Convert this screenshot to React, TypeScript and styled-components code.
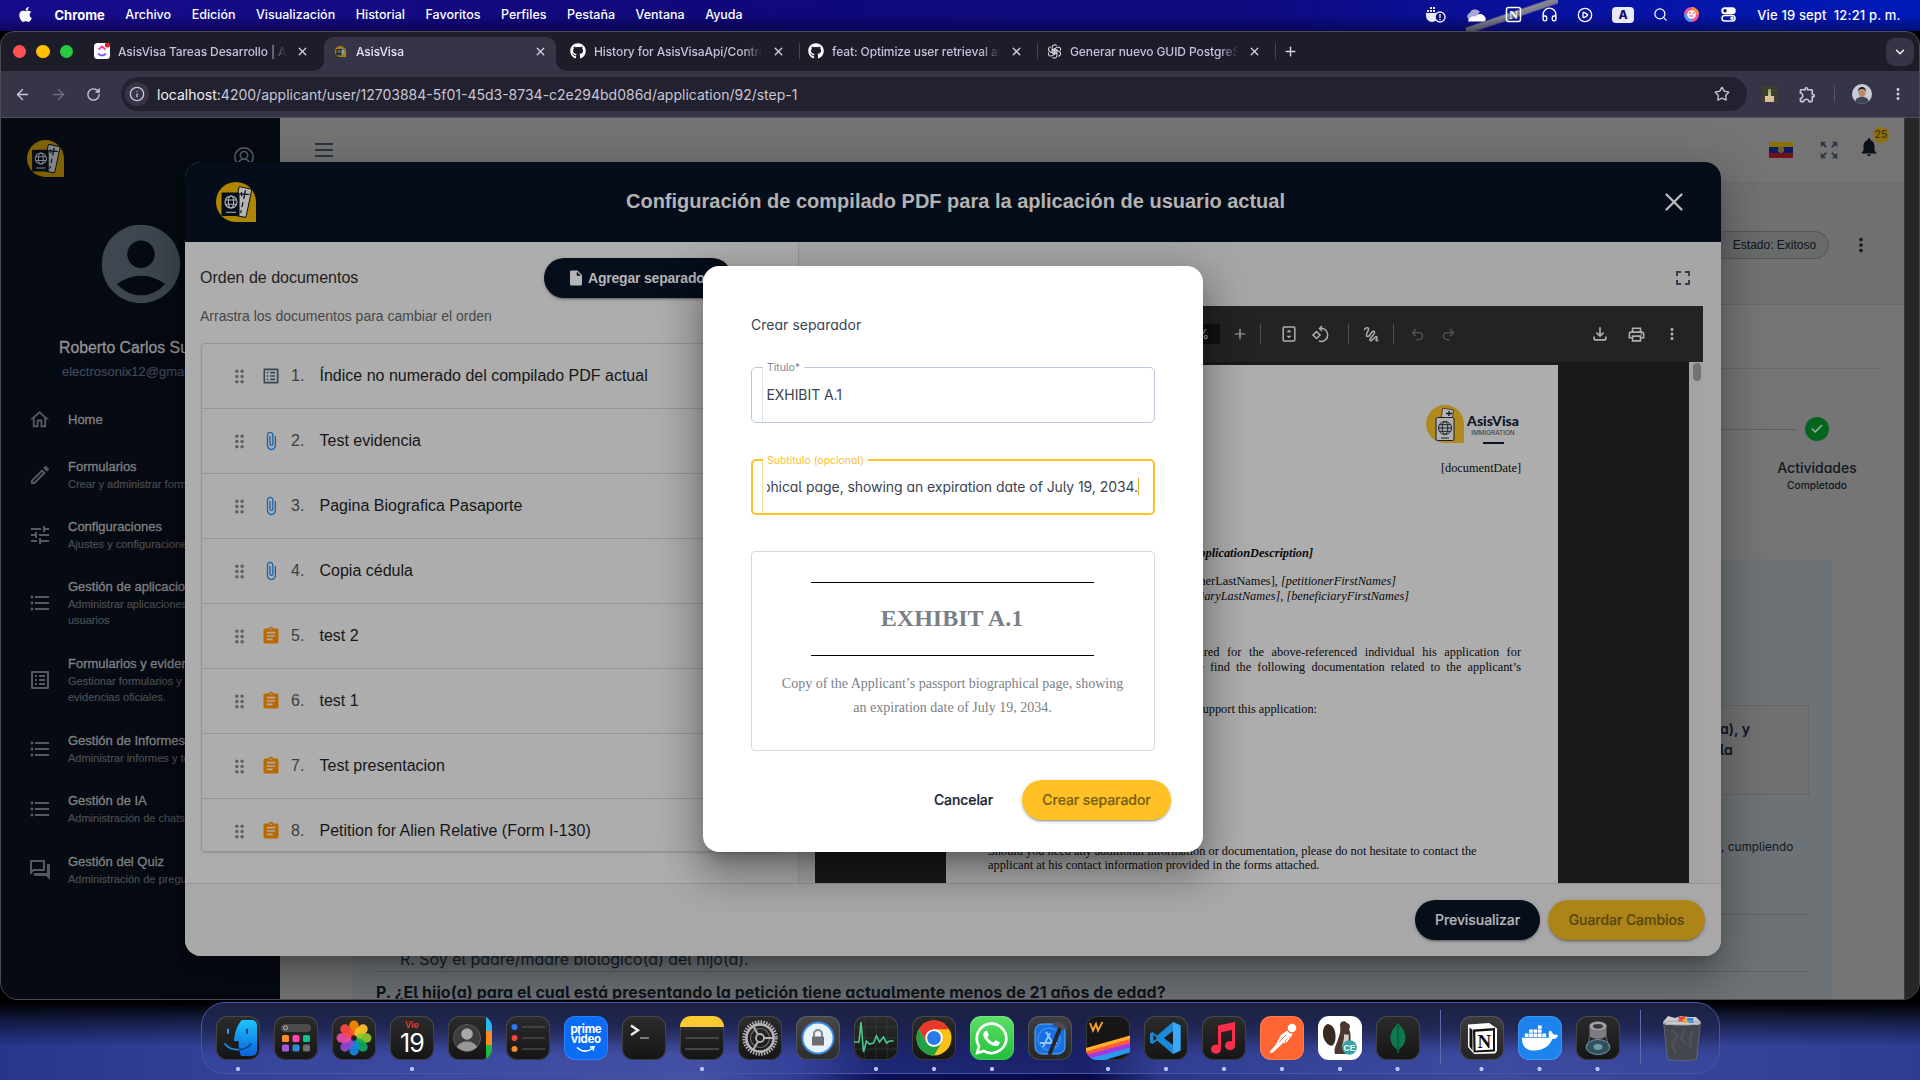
import React from 'react';
import styled, { createGlobalStyle, css } from 'styled-components';
import {
  MdOutlineHome, MdOutlineEdit, MdTune, MdFormatListBulleted, MdOutlineListAlt, MdOutlineQuestionAnswer,
  MdAccountCircle, MdDragIndicator, MdAttachFile, MdAssignment, MdInsertDriveFile, MdFullscreen,
  MdNotifications, MdZoomOutMap, MdMoreVert, MdOutlineFileDownload, MdOutlinePrint, MdListAlt, MdOutlineExtension,
} from 'react-icons/md';
import { FaApple, FaGithub, FaDocker, FaWhatsapp } from 'react-icons/fa';
import {
  ArrowLeft, ArrowRight, RotateCw, Info, Star, X, Plus, ChevronDown, Search, Headphones,
  CirclePlay, CircleUserRound, Check, Undo2, Redo2,
} from 'lucide-react';

const INTER = `Inter, Roboto, sans-serif`;
const HELV = `"Liberation Sans", Arial, sans-serif`;
const SERIF = `"Liberation Serif", "Times New Roman", serif`;

const Global = createGlobalStyle`
  * { box-sizing: border-box; }
  body { margin: 0; background: #000; }
  p, h1, h2, h3 { margin: 0; font-weight: inherit; font-size: inherit; }
  button { border: 0; padding: 0; font: inherit; color: inherit; background: none; }
`;

/* ---------- desktop ---------- */
const Desktop = styled.div`
  position: relative;
  width: 1920px;
  height: 1080px;
  overflow: hidden;
  display: flex;
  flex-direction: column;
  font-family: ${INTER};
  background:
    radial-gradient(circle at 20px 978px, transparent 19px, #1c64a8 20px, #12488a 24px, transparent 27px) 0 978px / 22px 24px no-repeat,
    linear-gradient(180deg, #000 0, #000 1003px, rgba(0, 0, 0, .55) 1020px, transparent 1046px),
    linear-gradient(90deg, #26368a 0, #36459a 300px, #4552a4 700px, #303b93 800px, #0b1156 880px, #070a48 1090px, #2a3786 1160px, #3c4a9c 1500px, #2e3d90 1920px);
`;

const MenuBar = styled.header`
  height: 31px;
  padding: 0 19.5px 2px 17px;
  display: flex;
  align-items: center;
  justify-content: space-between;
  color: #fff;
  font-size: 12.5px;
  font-weight: 500;
  background:
    linear-gradient(180deg, transparent 15px, rgba(0, 0, 20, .4) 31px),
    linear-gradient(to bottom right, transparent 43%, #8c8c96 46%, #77788a 54%, transparent 57%) 1466px 0 / 92px 31px no-repeat,
    linear-gradient(90deg, #170b8c 0, #10087a 700px, #0e0a80 1250px, #0812a0 1560px, #001ab8 1920px);
`;
const MenuGroup = styled.div<{ $gap: number }>`
  display: flex;
  align-items: center;
  gap: ${p => p.$gap}px;
`;
const MenuWord = styled.span<{ $bold?: boolean }>`
  font-weight: ${p => (p.$bold ? 700 : 500)};
  font-size: ${p => (p.$bold ? 13 : 12.5)}px;
`;
const Clock = styled.span`
  font-size: 13px;
  letter-spacing: .15px;
  white-space: pre;
  margin-left: 2px;
`;
const Assistant = styled.span`
  display: flex;
  margin: 0 3px 0 -3px;
`;
const KeyBadge = styled.span`
  width: 22px;
  height: 16px;
  border-radius: 4px;
  background: #e9e9f6;
  color: #11106f;
  font-weight: 800;
  font-size: 12px;
  line-height: 16px;
  text-align: center;
`;

/* ---------- browser ---------- */
const Browser = styled.main`
  height: 969px;
  flex: none;
  display: flex;
  flex-direction: column;
  border: 1px solid #4b4b50;
  border-radius: 14px 14px 18px 18px;
  overflow: hidden;
  background: #1c1d29;
`;
const TabStrip = styled.nav`
  height: 39px;
  flex: none;
  display: flex;
  align-items: center;
  padding: 0 5px 0 12px;
  color: #c6c0dc;
`;
const Lights = styled.div`
  display: flex;
  gap: 10px;
  width: 73px;
  span { width: 13.4px; height: 13.4px; border-radius: 50%; }
  span:nth-child(1) { background: #ff5155; }
  span:nth-child(2) { background: #ffc000; }
  span:nth-child(3) { background: #28c840; }
`;
const Tab = styled.div<{ $active?: boolean; $sep?: boolean }>`
  position: relative;
  width: 238px;
  height: 34px;
  margin-top: 5px;
  padding: 0 15px 6px 8px;
  display: flex;
  align-items: center;
  gap: 8px;
  font-size: 12px;
  font-weight: 500;
  letter-spacing: -.1px;
  & > svg:last-of-type { color: #d8d3ea; }
  ${p => p.$active && css`
    color: #e6e2f5;
    &::before {
      content: '';
      position: absolute;
      z-index: 0;
      left: 0;
      right: 6px;
      top: 0;
      bottom: 0;
      border-radius: 10px 10px 0 0;
      background: #353547;
    }
    &::after {
      content: '';
      position: absolute;
      left: -10px;
      right: -4px;
      bottom: 0;
      height: 10px;
      background:
        radial-gradient(circle at 0 0, transparent 9.5px, #353547 10px) 0 0 / 10px 10px no-repeat,
        radial-gradient(circle at 10px 0, transparent 9.5px, #353547 10px) 100% 0 / 10px 10px no-repeat;
    }
    & > * { position: relative; z-index: 1; }
  `}
  ${p => p.$sep && css`
    background: linear-gradient(#43435a, #43435a) 100% 6px / 1.5px 16px no-repeat;
  `}
`;
const TabTitle = styled.span`
  flex: 1;
  white-space: nowrap;
  overflow: hidden;
  mask-image: linear-gradient(90deg, #000 88%, transparent 99%);
`;
const Favicon = styled.span`
  width: 16px;
  height: 16px;
  display: flex;
  align-items: center;
  justify-content: center;
`;
const NewTab = styled.button`
  margin-left: 7px;
  display: flex;
  color: #d8d3ea;
`;
const TabMenu = styled.button`
  margin-left: auto;
  width: 28px;
  height: 28px;
  border-radius: 9px;
  background: #353547;
  color: #eee;
  display: flex;
  align-items: center;
  justify-content: center;
`;
const Toolbar = styled.div`
  height: 47px;
  flex: none;
  display: flex;
  align-items: center;
  padding: 0 12px 0 13px;
  background: #353547;
  border-bottom: 1px solid #504f5c;
  color: #ccc6dd;
`;
const NavIcons = styled.div`
  display: flex;
  align-items: center;
  gap: 19px;
  width: 107px;
`;
const UrlBar = styled.div`
  width: 1626px;
  height: 34px;
  border-radius: 17px;
  background: #22212f;
  display: flex;
  align-items: center;
  padding: 0 17px 0 4px;
  font-size: 14px;
  color: #c9c6d6;
  b { font-weight: 400; color: #f2f1f8; }
`;
const InfoDot = styled.span`
  width: 24px;
  height: 24px;
  border-radius: 50%;
  background: #353547;
  display: flex;
  align-items: center;
  justify-content: center;
  margin-right: 8px;
`;
const StarSlot = styled.span`
  margin-left: auto;
  display: flex;
`;
const Extensions = styled.div`
  margin-left: auto;
  display: flex;
  align-items: center;
  gap: 17px;
`;
const ExtThumb = styled.span`
  width: 15px;
  height: 16px;
  margin-right: 4px;
  background:
    linear-gradient(#8fa06a, #d9c79a) 6px 3px / 3px 8px no-repeat,
    linear-gradient(#e8c9a4, #d9b68f) 3px 10px / 9px 6px no-repeat,
    #3d3f30;
`;
const ThinBar = styled.i<{ $h: number; $c: string }>`
  width: 1px;
  height: ${p => p.$h}px;
  background: ${p => p.$c};
`;
const ProfilePic = styled.span`
  width: 20px;
  height: 20px;
  border-radius: 50%;
  overflow: hidden;
  background: #c9ccd6;
  display: flex;
`;

/* ---------- page ---------- */
const Page = styled.div`
  flex: 1;
  min-height: 0;
  display: flex;
`;
const Sidebar = styled.aside`
  width: 279px;
  background: #060a12;
  font-family: ${HELV};
  color: #818283;
`;
const SideTop = styled.div`
  height: 85px;
  padding: 22px 25px 0 26px;
  display: flex;
  justify-content: space-between;
  color: #565f6c;
  & > svg:last-child { margin-top: 6px; }
`;
const Person = styled.div`
  height: 192px;
  display: flex;
  flex-direction: column;
  align-items: center;
  color: #3e4650;
  & > svg { margin-top: 14px; }
`;
const PersonName = styled.div`
  align-self: flex-start;
  margin: 27px 0 0 58px;
  color: #949494;
  font-size: 15.8px;
  line-height: 20px;
  white-space: nowrap;
  -webkit-text-stroke: .3px #949494;
`;
const PersonMail = styled.div`
  align-self: flex-start;
  margin: 5px 0 0 61px;
  font-size: 13px;
  line-height: 18px;
  color: #40495a;
  -webkit-text-stroke: .2px #40495a;
`;
const NavItem = styled.div<{ $h: number }>`
  height: ${p => p.$h}px;
  padding-left: 27px;
  display: grid;
  grid-template-columns: 40px 175px;
  align-items: center;
  svg { color: #55585c; }
`;
const NavTitle = styled.div`
  font-size: 13px;
  line-height: 18px;
  white-space: nowrap;
  -webkit-text-stroke: .3px currentColor;
`;
const NavSub = styled.div`
  font-size: 11px;
  line-height: 16px;
  color: #4c4e51;
  -webkit-text-stroke: .2px currentColor;
  white-space: pre;
`;
const Content = styled.section`
  width: 1624px;
  background: #757575;
  display: flex;
  flex-direction: column;
  font-feature-settings: 'cv05', 'cv11';
  color: #111722;
`;
const TopRow = styled.div`
  height: 65px;
  flex: none;
  padding: 0 16px 0 35px;
  display: flex;
  align-items: center;
  background: #747474;
  border-bottom: 1px solid #6a6a6b;
  color: #262f3f;
`;
const TopRight = styled.div`
  margin-left: auto;
  display: flex;
  align-items: center;
`;
const Burger = styled.i`
  width: 18px;
  height: 14px;
  border-top: 2px solid #2a3342;
  border-bottom: 2px solid #2a3342;
  background: linear-gradient(#2a3342, #2a3342) 0 4px / 18px 2px no-repeat;
`;
const Flag = styled.i`
  position: relative;
  width: 24px;
  height: 16px;
  margin-right: 25px;
  border-radius: 1px;
  background: linear-gradient(180deg, #8a7000 0, #8a7000 5px, #0d1c62 5px, #0d1c62 11px, #73101c 11px);
  &::after {
    content: '';
    position: absolute;
    left: 9px;
    top: 4px;
    width: 6px;
    height: 7px;
    border-radius: 3px;
    background: #6d6036;
  }
`;
const Bell = styled.div`
  position: relative;
  display: flex;
  margin: 0 8px 6px 18px;
  color: #0a101a;
`;
const BellCount = styled.span`
  position: absolute;
  right: -9px;
  top: -9px;
  width: 16px;
  height: 16px;
  border-radius: 50%;
  background: #90700f;
  color: #3c320f;
  font-size: 10.5px;
  font-weight: 500;
  line-height: 16px;
  text-align: center;
`;
const StateRow = styled.div`
  height: 122px;
  flex: none;
  padding: 2px 32px 0 0;
  display: flex;
  justify-content: flex-end;
  align-items: center;
  background: #717171;
  border-bottom: 1px solid #66666c;
`;
const Chip = styled.span`
  width: 118px;
  height: 28px;
  border: 1px solid #565656;
  border-radius: 14px;
  background: #696a6a;
  font: 12px/26px ${HELV};
  color: #10141c;
  text-align: center;
  padding-left: 9px;
  margin-right: 21px;
`;
const Divider = styled.div`
  height: 64px;
  flex: none;
  margin-right: 23px;
  border-bottom: 1px solid #676772;
`;
const Stepper = styled.div`
  height: 190px;
  flex: none;
  padding: 48px 27px 0 0;
  display: flex;
  justify-content: flex-end;
`;
const StepLine = styled.i`
  width: 200px;
  height: 1px;
  margin-top: 12px;
  margin-right: -40px;
  background: #5f5f64;
`;
const Step = styled.div`
  width: 120px;
  display: flex;
  flex-direction: column;
  align-items: center;
  font-size: 14px;
  font-weight: 500;
  line-height: 20px;
  small { font-size: 10.2px; font-weight: 500; line-height: 15px; }
`;
const StepDot = styled.span`
  width: 24px;
  height: 24px;
  margin-bottom: 17px;
  border-radius: 50%;
  background: #04661e;
  color: #8fa894;
  display: flex;
  align-items: center;
  justify-content: center;
`;
const BluePanel = styled.div`
  flex: 1;
  min-height: 0;
  overflow: hidden;
  margin: 0 71px 0 73px;
  padding: 146px 24px 0 23px;
  border-radius: 6px 6px 0 0;
  background: #6c7276;
`;
const Quote = styled.div`
  height: 90px;
  padding: 13px 0 0 1343px;
  border: 1px solid #62666b;
  background: #717171;
  font-size: 14px;
  font-weight: 600;
  line-height: 20.5px;
  color: #0e1624;
  white-space: nowrap;
`;
const AnswerTail = styled.p`
  height: 120px;
  padding: 42px 0 0 1345px;
  border-bottom: 1px solid #5f6368;
  font-size: 11.8px;
  line-height: 20px;
  white-space: nowrap;
`;
const Answer = styled.p`
  height: 57px;
  padding: 32px 0 0 24px;
  border-bottom: 1px solid #5c6065;
  font-size: 16px;
  letter-spacing: -.03px;
  line-height: 24px;
  color: #1a2029;
`;
const Question = styled.p`
  padding-top: 8px;
  font-size: 16px;
  font-weight: 700;
  line-height: 24px;
  letter-spacing: .035px;
  color: #10151d;
`;
const PageScroll = styled.div`
  flex: 1;
  background: #272727;
  border-left: 1px solid #3b3b3b;
`;

/* ---------- compile dialog ---------- */
const Clip = styled.div`
  position: absolute;
  left: 1px;
  top: 118px;
  width: 1918px;
  height: 881px;
  border-radius: 0 0 17px 17px;
  overflow: hidden;
`;
const DialogShadow = styled.div`
  position: absolute;
  left: 184px;
  top: 44px;
  width: 1536px;
  height: 794px;
  border-radius: 16px;
  box-shadow: 0 11px 15px -7px rgba(0, 0, 0, .2), 0 24px 38px 3px rgba(0, 0, 0, .16), 0 9px 46px 8px rgba(0, 0, 0, .14);
`;
const CompileDialog = styled.section`
  position: absolute;
  left: 185px;
  top: 162px;
  width: 1536px;
  height: 794px;
  border-radius: 16px;
  overflow: hidden;
  display: flex;
  flex-direction: column;
  background: #a9a9a9;
  font-family: ${HELV};
`;
const DialogHead = styled.header`
  height: 80px;
  flex: none;
  padding: 0 32px 0 31px;
  display: flex;
  align-items: center;
  justify-content: space-between;
  background: #060d1a;
  color: #b3b3b3;
  h2 { font-size: 20px; font-weight: 700; line-height: 24px; margin: 0 4px 2px 0; }
`;
const DialogBody = styled.div`
  flex: 1;
  min-height: 0;
  display: flex;
`;
const OrderPane = styled.div`
  width: 614px;
  padding: 16px 14px 0 15px;
  background: #adadad;
  border-right: 1px solid #989898;
`;
const OrderHead = styled.div`
  height: 40px;
  display: flex;
  align-items: center;
  justify-content: space-between;
  padding-right: 52px;
  font-size: 16px;
  color: #1e1e1e;
  h3 { padding-bottom: 1px; }
`;
const Pill = styled.button<{ $w: number; $tone: 'navy' | 'gold' | 'goldBright' }>`
  width: ${p => p.$w}px;
  height: 40px;
  padding-bottom: 1px;
  border-radius: 20px;
  display: flex;
  align-items: center;
  justify-content: center;
  font-family: ${INTER};
  font-size: 14px;
  font-weight: 500;
  letter-spacing: -.06px;
  -webkit-text-stroke: .2px currentColor;
  box-shadow: 0 3px 1px -2px rgba(0, 0, 0, .2), 0 2px 2px rgba(0, 0, 0, .14), 0 1px 5px rgba(0, 0, 0, .12);
  ${p => p.$tone === 'navy' && css`background: #060d1b; color: #b5b6b8;`}
  ${p => p.$tone === 'gold' && css`background: #ad8418; color: #59480f;`}
  ${p => p.$tone === 'goldBright' && css`background: #ffc125; color: #7c6219;`}
`;
const AddPill = styled(Pill)`
  justify-content: flex-start;
  padding-left: 23px;
  gap: 3px;
  font-family: ${HELV};
  font-weight: 700;
  letter-spacing: -.2px;
  -webkit-text-stroke: 0;
`;
const Hint = styled.p`
  margin: 9px 0 18px;
  font-size: 14px;
  line-height: 18px;
  color: #474747;
`;
const DocList = styled.div`
  height: 509px;
  margin-left: 1px;
  border: 1px solid #969696;
  border-radius: 4px;
  overflow: hidden;
  box-shadow: 0 1px 2px rgba(0, 0, 0, .15);
`;
const DocRow = styled.div<{ $kind: 'index' | 'clip' | 'form' }>`
  height: 65px;
  padding-left: 27px;
  display: grid;
  grid-template-columns: 33px 29px 28.5px 1fr;
  align-items: center;
  border-bottom: 1px solid #969696;
  font-size: 16px;
  color: #161616;
  & > svg:first-child { color: #616161; }
  & > svg:nth-child(2) {
    color: ${p => ({ index: '#3a4a53', clip: '#1462b0', form: '#b86a00' })[p.$kind]};
    margin-left: -1px;
  }
  span { color: #3e3e3e; }
`;
const PreviewPane = styled.div`
  flex: 1;
  display: flex;
  flex-direction: column;
  padding-left: 16px;
  background: #a6a6a6;
`;
const PreviewTop = styled.div`
  height: 64px;
  flex: none;
  display: flex;
  align-items: center;
  justify-content: flex-end;
  padding: 8px 26px 0 0;
  color: #333f4e;
`;
const PdfBar = styled.div`
  width: 888px;
  height: 56px;
  flex: none;
  display: flex;
  align-items: center;
  background: #232323;
  color: #b0b0b0;
  padding-left: 345px;
`;
const ZoomBox = styled.span`
  width: 60px;
  height: 20px;
  padding-right: 11px;
  background: #111;
  font: 13px/20px ${INTER};
  text-align: right;
`;
const BarItem = styled.span<{ $w: number; $dim?: boolean }>`
  width: ${p => p.$w}px;
  flex: none;
  display: flex;
  justify-content: center;
  color: ${p => (p.$dim ? '#565656' : '#b0b0b0')};
`;
const Viewer = styled.div`
  width: 888px;
  flex: 1;
  min-height: 0;
  display: flex;
  background: #191919;
`;
const Sheet = styled.article`
  width: 612px;
  margin: 3px auto 0 131px;
  padding: 40px 37px 0 42px;
  background: #adadad;
  overflow: hidden;
  font: 12.33px/15px ${SERIF};
  color: #0a0a0a;
`;
const ViewerScroll = styled.div`
  width: 14px;
  padding: 1px 0 0 4px;
  background: #a3a3a3;
  i { display: block; width: 8px; height: 18px; border-radius: 4px; background: #737373; }
`;
const Letterhead = styled.div`
  height: 39px;
  display: flex;
  justify-content: flex-end;
  gap: 1px;
`;
const Brand = styled.div`
  width: 56px;
  display: flex;
  flex-direction: column;
  align-items: center;
  font: 900 14px/17px Lato, "Open Sans", sans-serif;
  color: #0b1426;
  padding-top: 7px;
  small { font: 6.4px/7px ${INTER}; color: #333; margin-top: 1px; }
  i { width: 21px; height: 1.6px; margin-top: 5px; background: #0b1426; }
`;
const SheetLine = styled.p<{ $top: number; $w: number; $ws?: number; $ital?: boolean; $bold?: boolean }>`
  display: flex;
  justify-content: flex-end;
  width: ${p => p.$w}px;
  margin-top: ${p => p.$top}px;
  white-space: pre;
  word-spacing: ${p => p.$ws ?? 0}px;
  font-style: ${p => (p.$ital ? 'italic' : 'normal')};
  font-weight: ${p => (p.$bold ? 700 : 400)};
`;
const Closing = styled.p`
  margin-top: 126.500px;
  line-height: 14.5px;
  white-space: pre;
`;
const DialogFoot = styled.footer`
  height: 73px;
  flex: none;
  display: flex;
  justify-content: flex-end;
  gap: 8px;
  padding: 16px 16px 0 0;
  background: #a8a8a8;
  border-top: 1px solid #959595;
`;

/* ---------- separator dialog ---------- */
const SeparatorDialog = styled.section`
  position: absolute;
  left: 703px;
  top: 266px;
  width: 500px;
  height: 586px;
  padding: 48px 32px 0 48px;
  border-radius: 16px;
  background: #fff;
  color: #3b4353;
  font-size: 14px;
  font-feature-settings: 'cv05', 'cv11';
  box-shadow: 0 11px 15px -7px rgba(0, 0, 0, .25), 0 24px 38px 3px rgba(0, 0, 0, .2), 0 9px 46px 8px rgba(0, 0, 0, .18);
  h3 { line-height: 22px; letter-spacing: .03px; margin-bottom: 31px; }
`;
const Field = styled.div<{ $focus?: boolean }>`
  position: relative;
  width: 404px;
  height: 56px;
  margin-bottom: 36px;
  border: ${p => (p.$focus ? '2px solid #fdc029' : '1px solid #bccadb')};
  border-radius: 5px;
  &::before {
    content: '';
    position: absolute;
    left: ${p => (p.$focus ? 9 : 10)}px;
    top: 0;
    bottom: 0;
    width: 1px;
    background: ${p => (p.$focus ? '#f5dc9a' : '#dde3ea')};
  }
`;
const FieldLabel = styled.label<{ $focus?: boolean }>`
  position: absolute;
  left: ${p => (p.$focus ? 10 : 11)}px;
  top: -8px;
  padding: 0 4px;
  background: #fff;
  font-size: 10.5px;
  letter-spacing: -.03px;
  line-height: 15px;
  color: ${p => (p.$focus ? '#fdc02f' : '#80868f')};
`;
const FieldValue = styled.div<{ $focus?: boolean }>`
  display: flex;
  justify-content: ${p => (p.$focus ? 'flex-end' : 'flex-start')};
  align-items: center;
  width: 372px;
  height: 18px;
  margin: ${p => (p.$focus ? '16px 0 0 14px' : '17px 0 0 14.5px')};
  overflow: hidden;
  white-space: nowrap;
  letter-spacing: -.065px;
  i { flex: none; width: 1px; height: 17px; background: #e0a820; }
`;
const Preview = styled.div`
  width: 404px;
  height: 200px;
  padding: 30px 29px 0 27px;
  border: 1px solid #d9d9d9;
  border-radius: 4px;
  font-family: ${SERIF};
  text-align: center;
  color: #7a7f87;
  font-feature-settings: normal;
  line-height: 24px;
  h2 {
    width: 283px;
    height: 74px;
    margin: 0 auto 16px;
    border-top: 1px solid #000;
    border-bottom: 1px solid #000;
    font-size: 24px;
    font-weight: 700;
    line-height: 71px;
  }
  p { margin-right: -1px; }
`;
const Actions = styled.div`
  display: flex;
  justify-content: flex-end;
  align-items: center;
  gap: 29px;
  margin-top: 29px;
  font-feature-settings: normal;
`;
const Cancel = styled.button`
  padding-bottom: 1px;
  font-weight: 500;
  letter-spacing: -.1px;
  color: #1b2433;
  -webkit-text-stroke: .2px currentColor;
`;

/* ---------- dock ---------- */
const DockBar = styled.footer`
  width: 1519px;
  height: 72px;
  flex: none;
  margin: 2px 0 0 201px;
  padding: 13px 14px 0;
  display: flex;
  gap: 14.2px;
  border: 1px solid #4655a6;
  border-radius: 24px;
  background: linear-gradient(180deg, rgba(30, 36, 72, .95) 0, rgba(32, 38, 82, .85) 22px, rgba(60, 75, 165, .35) 52px, rgba(60, 75, 165, .4) 100%);
`;
const DockSlot = styled.div<{ $running?: boolean }>`
  width: 43.8px;
  height: 56px;
  flex: none;
  background: ${p => (p.$running ? 'radial-gradient(circle at 50% 53px, #b9c0f5 1.8px, transparent 2.4px)' : 'none')};
`;
const Tile = styled.div<{ $bg?: string }>`
  width: 44px;
  height: 44px;
  border-radius: 11px;
  overflow: hidden;
  display: flex;
  align-items: center;
  justify-content: center;
  background: ${p => p.$bg ?? 'linear-gradient(180deg, #2c2c2d, #151516)'};
  box-shadow: inset 0 0 0 1px rgba(255, 255, 255, .14);
  svg { display: block; }
`;
const DockDivider = styled.i`
  width: 1px;
  height: 54px;
  margin: -6px 4.6px 0 6.2px;
  background: #5f6cab;
`;
const CalendarFace = styled.div`
  display: flex;
  flex-direction: column;
  align-items: center;
  font: 500 9px/10px ${INTER};
  color: #f2403f;
  b { font: 400 25px/26px ${INTER}; letter-spacing: -1px; color: #fff; }
`;
const PrimeFace = styled.div`
  font: 700 11.5px/10.5px ${INTER};
  color: #fff;
  text-align: center;
  letter-spacing: -.3px;
  svg { margin: 1px auto 0; }
`;

const BrandMark = ({ size, dim = 1 }: { size: number; dim?: number }) => (
  <svg width={size} height={size} viewBox="0 0 40 40" opacity={dim}>
    <path d="M20 0A20 20 0 0 1 40 20V40H20A20 20 0 0 1 20 0Z" fill="#b08500" />
    <g transform="rotate(12 26 20)">
      <rect x="20" y="5.500" width="13" height="29" rx="1.500" fill="#b5b5b5" stroke="#0a0f1a" strokeWidth="1" />
      <path d="M22 12.500l9.500-1.500M27 8l0 8.500M23.500 10.500l1 4" stroke="#0a0f1a" strokeWidth="1.400" />
      <path d="M27 20v5M27 28v3" stroke="#0a0f1a" strokeWidth="1.200" />
    </g>
    <rect x="5.500" y="10.500" width="18" height="23.500" rx="1" fill="#060d1b" />
    <g fill="none" stroke="#b5b5b5" strokeWidth="1.100">
      <circle cx="15" cy="20" r="6" />
      <ellipse cx="15" cy="20" rx="2.600" ry="6" />
      <path d="M9.400 18h11.200M9.400 22.200h11.200M10 30.300h10" />
    </g>
  </svg>
);

const PaperMark = () => (
  <svg width="38" height="39" viewBox="0 0 38 39">
    <path d="M19 0A19 19 0 0 1 38 19V38H19A19 19 0 0 1 19 0Z" fill="#b08a1c" />
    <rect x="16" y="4" width="11" height="9" fill="#b8b8b8" stroke="#222" strokeWidth=".7" transform="rotate(8 21 8)" />
    <path d="M20 8.500h6M23 6v5" stroke="#111" strokeWidth="1.300" />
    <rect x="10" y="12.500" width="18" height="23" rx="1.500" fill="#b0b0b0" stroke="#17202f" />
    <g fill="none" stroke="#17202f" strokeWidth="1">
      <circle cx="19" cy="23" r="6.500" /><ellipse cx="19" cy="23" rx="2.800" ry="6.500" /><path d="M12.500 23h13M13.500 19.700h11M13.500 26.300h11M15 33h8" />
    </g>
  </svg>
);

const tabs = [
  { title: 'AsisVisa Tareas Desarrollo | AsisVisa', icon: 'clickup' },
  { title: 'AsisVisa', icon: 'asis', active: true },
  { title: 'History for AsisVisaApi/Controllers', icon: 'gh', sep: true },
  { title: 'feat: Optimize user retrieval and', icon: 'gh', sep: true },
  { title: 'Generar nuevo GUID PostgreSQL', icon: 'ai', sep: true },
];

const TabIcon = ({ name }: { name: string }) => {
  if (name === 'gh') return <FaGithub size={16} color="#fff" />;
  if (name === 'asis') return <BrandMark size={11} />;
  if (name === 'ai')
    return (
      <svg width="15" height="15" viewBox="0 0 24 24" fill="none" stroke="#dcdce6" strokeWidth="1.700">
        {[0, 60, 120, 180, 240, 300].map(a => (
          <path key={a} transform={`rotate(${a} 12 12)`} d="M8.200 9.800V5.300a4 4 0 0 1 7.300-2.200M8.200 9.800l3.800 2.200" />
        ))}
        <path d="M12 7.600l3.800 2.200v4.400L12 16.400l-3.800-2.200V9.800Z" />
      </svg>
    );
  return (
    <svg width="16" height="16" viewBox="0 0 16 16">
      <rect width="16" height="16" rx="3.500" fill="#fff" />
      <path d="M4.500 6.500L8 3.500l3.500 3" fill="none" stroke="#f0409a" strokeWidth="2" />
      <path d="M4 10.500c2.200 2.800 5.800 2.800 8 0" fill="none" stroke="#6a5cf5" strokeWidth="2" />
      <circle cx="13.500" cy="2" r="2.600" fill="#e02020" />
    </svg>
  );
};

const docs: { kind: 'index' | 'clip' | 'form'; name: string }[] = [
  { kind: 'index', name: 'Índice no numerado del compilado PDF actual' },
  { kind: 'clip', name: 'Test evidencia' },
  { kind: 'clip', name: 'Pagina Biografica Pasaporte' },
  { kind: 'clip', name: 'Copia cédula' },
  { kind: 'form', name: 'test 2' },
  { kind: 'form', name: 'test 1' },
  { kind: 'form', name: 'Test presentacion' },
  { kind: 'form', name: 'Petition for Alien Relative (Form I-130)' },
];
const docIcon = { index: <MdListAlt size={20} />, clip: <MdAttachFile size={20} />, form: <MdAssignment size={20} /> };

const nav = [
  { h: 49.5, icon: <MdOutlineHome size={23} />, title: 'Home' },
  { h: 60, icon: <MdOutlineEdit size={24} />, title: 'Formularios', sub: 'Crear y administrar form' },
  { h: 60, icon: <MdTune size={24} />, title: 'Configuraciones', sub: 'Ajustes y configuraciones' },
  { h: 77, icon: <MdFormatListBulleted size={24} />, title: 'Gestión de aplicacione', sub: 'Administrar aplicaciones\nusuarios' },
  { h: 77, icon: <MdOutlineListAlt size={24} />, title: 'Formularios y eviden', sub: 'Gestionar formularios y\nevidencias oficiales.' },
  { h: 60, icon: <MdFormatListBulleted size={24} />, title: 'Gestión de Informes', sub: 'Administrar informes y te' },
  { h: 60.5, icon: <MdFormatListBulleted size={24} />, title: 'Gestión de IA', sub: 'Administración de chats' },
  { h: 61.5, icon: <MdOutlineQuestionAnswer size={24} />, title: 'Gestión del Quiz', sub: 'Administración de pregu' },
];

const Finder = () => (
  <svg width="44" height="44" viewBox="0 0 44 44">
    <defs><linearGradient id="fb" x2="0" y2="1"><stop stopColor="#1cc4ff" /><stop offset="1" stopColor="#0a62d8" /></linearGradient></defs>
    <path d="M26 4h10a5 5 0 0 1 5 5v26a5 5 0 0 1-5 5H25c-2-5-2.500-10-2.300-15H18C18.500 17 21 9 26 4Z" fill="url(#fb)" />
    <path d="M12 13.500v3.500" stroke="#2a9df0" strokeWidth="2" strokeLinecap="round" />
    <path d="M31 13.500v3.500" stroke="#0b3f80" strokeWidth="2" strokeLinecap="round" />
    <path d="M9 28c6 7.500 19 7.500 26 0" fill="none" stroke="#1590ee" strokeWidth="1.800" strokeLinecap="round" />
    <path d="M23.500 33.500c4-.3 8.500-2 11.500-5.500" fill="none" stroke="#0b3f80" strokeWidth="1.800" strokeLinecap="round" />
  </svg>
);
const Calculator = () => (
  <svg width="44" height="44" viewBox="0 0 44 44">
    <rect x="7" y="8" width="30" height="8" rx="4" fill="#4c4c4e" /><circle cx="11.500" cy="11.800" r="2" fill="none" stroke="#bbb" />
    {['#ff8a2a', '#ff4aa6', '#12c08a', '#a559d8', '#2b8bd6', '#707072'].map((c, i) => (
      <rect key={c} x={8 + (i % 3) * 10.5} y={19 + Math.floor(i / 3) * 9.5} width="7" height="7" rx="1.600" fill={c} />
    ))}
  </svg>
);
const Photos = () => (
  <svg width="44" height="44" viewBox="0 0 44 44">
    {['#ff8a00', '#ffc42a', '#8ecb2a', '#12a860', '#1288e0', '#8a4ad0', '#e84aa8', '#ff4a3c'].map((c, i) => (
      <rect key={c} x="17.300" y="4.500" width="9.400" height="15" rx="4.700" fill={c} fillOpacity=".92" transform={`rotate(${i * 45} 22 22)`} />
    ))}
    <circle cx="22" cy="22" r="2.600" fill="#222" />
  </svg>
);
const Contacts = () => (
  <svg width="44" height="44" viewBox="0 0 44 44">
    <path d="M38 0h6v15h-6z" fill="#28b8f0" /><path d="M38 15h6v14h-6z" fill="#ff8a1e" /><path d="M38 29h6v15h-6z" fill="#20b840" />
    <circle cx="19" cy="22" r="13.500" fill="#3c3c3e" stroke="#5a5a5c" /><circle cx="19" cy="18" r="5.800" fill="#a8a8aa" />
    <path d="M9 31c3-7.500 17-7.500 20 0-5 5.500-15 5.500-20 0Z" fill="#98989a" />
  </svg>
);
const Reminders = () => (
  <svg width="44" height="44" viewBox="0 0 44 44">
    {['#2a7cf6', '#f0463c', '#f0902a'].map((c, i) => (
      <g key={c}><circle cx="8.500" cy={11 + i * 11} r="3" fill={c} /><path d={`M16 ${11 + i * 11}h23`} stroke="#5c5c5e" strokeWidth="1.200" /></g>
    ))}
  </svg>
);
const Terminal = () => (
  <svg width="44" height="44" viewBox="0 0 44 44" fill="none" stroke="#eee" strokeWidth="2.400">
    <path d="M9 9.500l7 4.800-7 4.800" /><path d="M18 22h9" stroke="#999" strokeWidth="1.600" />
  </svg>
);
const Notes = () => (
  <svg width="44" height="44" viewBox="0 0 44 44">
    <path d="M0 0h44v11H0z" fill="#f8cc30" /><path d="M1 13h42" stroke="#555" strokeDasharray="1 1.500" />
    <path d="M5 22h34M5 33h34" stroke="#6a6a6c" strokeWidth="1.200" />
  </svg>
);
const Gear = () => (
  <svg width="44" height="44" viewBox="0 0 44 44" fill="none" stroke="#b4b4b8">
    <circle cx="22" cy="22" r="16.200" strokeWidth="3" strokeDasharray="1.500 1.330" /><circle cx="22" cy="22" r="13.600" strokeWidth="2.600" />
    <circle cx="22" cy="22" r="9.500" strokeWidth="1.200" stroke="#6a6a6c" />
    <path d="M22 22h13M22 22l-6.500-11.300M22 22l-6.500 11.300" strokeWidth="2" /><circle cx="22" cy="22" r="4" fill="#222" strokeWidth="1.800" />
  </svg>
);
const LockApp = () => (
  <svg width="44" height="44" viewBox="0 0 44 44">
    <circle cx="22" cy="22" r="16.500" fill="#3a8be0" /><circle cx="22" cy="22" r="14.600" fill="#e8f2fb" />
    <path d="M18 22v-4a4 4 0 0 1 8 0v4" fill="none" stroke="#888" strokeWidth="2" /><rect x="16" y="20.500" width="12" height="9" rx="1" fill="#6d6d70" />
  </svg>
);
const Activity = () => (
  <svg width="44" height="44" viewBox="0 0 44 44" fill="none">
    <path d="M11 0v44M22 0v44M33 0v44M0 11h44M0 22h44M0 33h44" stroke="#2e4a3a" strokeWidth=".6" />
    <path d="M0 26h5l2-20 2.500 30 3-11 3 3 4-1 3-7 3 6 4-5 3 6 3-2h4" stroke="#4bc98a" strokeWidth="1.600" />
  </svg>
);
const ChromeApp = () => (
  <svg width="44" height="44" viewBox="0 0 44 44">
    <circle cx="22" cy="22" r="17.500" fill="#fbc116" />
    <path d="M22 13.250h15.150A17.500 17.500 0 0 0 6.850 13.250l7.600 13Z" fill="#e8382c" />
    <path d="M6.850 13.250A17.500 17.500 0 0 0 22 39.500l7.600-13.100H14.400Z" fill="#22a045" />
    <circle cx="22" cy="22" r="8.700" fill="#fff" /><circle cx="22" cy="22" r="6.900" fill="#2a7bea" />
  </svg>
);
const Xcode = () => (
  <svg width="44" height="44" viewBox="0 0 44 44">
    <rect x="7" y="8" width="30" height="30" rx="7" fill="#1a6fe0" stroke="#5ab0ff" /><circle cx="21" cy="23" r="11" fill="none" stroke="#4a9af5" />
    <path d="M15 31l7-14M18 16l9 15M12 27h17" stroke="#8fc8ff" strokeWidth="1.800" fill="none" />
    <path d="M33 10L22 37" stroke="#25252a" strokeWidth="4" strokeLinecap="round" /><path d="M25 6.500c5-2 11 0 14 6l-4 1.500c-2-2.500-6-3.500-10-3.500Z" fill="#4a4c52" />
  </svg>
);
const WarpStripes = () => (
  <svg width="44" height="44" viewBox="0 0 44 44">
    <path d="M0 32L44 19.500v5.500L0 37.500Z" fill="#ffb02a" /><path d="M0 35.500L44 23v5L0 40.500Z" fill="#ff5a3c" />
    <path d="M0 39L44 27v5L0 44.500Z" fill="#a03ae0" /><path d="M0 43.500L44 31.500v5L12 46H0Z" fill="#2a9af0" />
    <path d="M4 7l3 7.500 3-6.500 2 6.500 4.500-8.500" fill="none" stroke="#f5a02a" strokeWidth="1.900" />
  </svg>
);
const VsCode = () => (
  <svg width="44" height="44" viewBox="0 0 44 44">
    <path d="M29 6l7.500 3.500v25L29 38 13 24.500l-4.500 3.600L6 26.500v-9l2.500-1.600L13 19.500Z" fill="#1e88d8" />
    <path d="M29 15v14l-9-7Z" fill="#1b1b1d" /><path d="M9.500 18.700v6.600L12.800 22Z" fill="#1b1b1d" /><path d="M29 6l7.500 3.500v25L29 38Z" fill="#3aa8f5" />
  </svg>
);
const Music = () => (
  <svg width="44" height="44" viewBox="0 0 44 44">
    <path d="M16 9.500L33 6v23.500a5 4.500 0 1 1-3-4V14l-11 2.300V33a5 4.500 0 1 1-3-4Z" fill="#fb2d4e" />
  </svg>
);
const Postman = () => (
  <svg width="44" height="44" viewBox="0 0 44 44" fill="#fff">
    <circle cx="32" cy="12" r="4.300" /><path d="M27 14.500c1 2 3 3.200 5 3l-9 9.500-10 9.500-3.500.5 1.500-3 5-5.500 4.500-9Z" />
    <path d="M32 18l-6 8M21 24l4 3" stroke="#fff" strokeWidth="1.500" /><path d="M19 26l7-7" stroke="#ff6c37" strokeWidth="1" />
  </svg>
);
const Beaver = () => (
  <svg width="44" height="44" viewBox="0 0 44 44">
    <path d="M10 8c6 1 8 8 7.500 14C17 29 14 31 11 29c-4-2.500-6.500-8-6-13C5.300 12 7 8.500 10 8Z" fill="#382923" />
    <path d="M22 9c0-4 5-5 7-2 3 1 4 4 2 6 2 4 1.500 8 1.500 12 0 6-2 11-5 13H17c-1.500-5 1-9 2.500-13 1.500-5 3.500-8 2.500-16Z" fill="#4b372e" />
    <path d="M26 18c1.500 1 3.500 1 4.500 0 .5 5 .5 10-2.500 15l-4-3c1-4 2.500-7 2-12Z" fill="#d8cfc8" /><circle cx="31.500" cy="31.500" r="7.300" fill="#35a2a6" />
    <text x="31.500" y="34.500" textAnchor="middle" fontFamily="Liberation Sans" fontWeight="700" fontSize="8.500" fill="#fff">CE</text>
  </svg>
);
const Leaf = () => (
  <svg width="44" height="44" viewBox="0 0 44 44">
    <path d="M22 7c5 6 8 10 7.500 16-.4 5-4 8-6.500 10.500l-.5 3.500h-1l-.5-3.500C18 31 15 28 14.500 23 14 17 17 13 22 7Z" fill="#0c7a4c" /><path d="M22 9v28" stroke="#065234" strokeWidth="1.200" />
  </svg>
);
const NotionApp = () => (
  <svg width="44" height="44" viewBox="0 0 44 44">
    <path d="M8 8.500L29 7l8 5.500V35l-2 2.500L14 38 8 31Z" fill="#fff" />
    <path d="M13 13.500l22-1.500v23.500l-21.500 1Z" fill="#111" /><path d="M9.500 11.500l3 2.500v20.500l-3-4Z" fill="#111" />
    <path d="M15.300 15.700l17.700-1.200v19l-17.400 1Z" fill="#fff" />
    <text x="24.300" y="31.500" textAnchor="middle" fontFamily="Liberation Serif" fontWeight="700" fontSize="19" fill="#111">N</text>
  </svg>
);
const Lens = () => (
  <svg width="44" height="44" viewBox="0 0 44 44">
    <ellipse cx="22" cy="31" rx="12" ry="7.500" fill="#31505e" stroke="#6d97a8" /><path d="M14 20l-3 11M30 20l3 11" stroke="#55727e" />
    <path d="M13.500 10c0-6 17-6 17 0v9c0 5-17 5-17 0Z" fill="#7c7c80" /><ellipse cx="22" cy="10" rx="8.500" ry="4.300" fill="#a2a2a6" /><ellipse cx="22" cy="10.300" rx="5" ry="2.400" fill="#3a3a3e" />
    <ellipse cx="22" cy="31" rx="4.500" ry="3" fill="#6f9aa8" />
  </svg>
);
const TrashCan = () => (
  <svg width="44" height="46" viewBox="0 0 44 46">
    <path d="M3.500 6l4 37c1 2 28 2 29 0l4-37Z" fill="#44464d" stroke="#6e7078" strokeWidth=".8" />
    <path d="M12 14l5 6-5 9 4 8M25 13l-4 9 5 6M33 14l-3 9 1 9" stroke="#4f5158" fill="none" strokeWidth="2.500" />
    <path d="M3 6l5-6 7 2 6-2 8 1 7 0 4 4 1 2-3 2H6Z" fill="#c9cbd0" /><path d="M19 1l6-1 1 6h-8Z" fill="#e8452c" /><path d="M27 2l6 0 1 5h-8Z" fill="#2a8ae0" /><path d="M23 3l4 0 2 4h-6Z" fill="#e8b82a" />
    <ellipse cx="22" cy="7" rx="19" ry="2" fill="none" stroke="#a2a4aa" strokeWidth=".9" />
  </svg>
);

const apps: { key: string; art: React.ReactNode; on?: boolean; bg?: string; rule?: boolean }[] = [
  { key: 'finder', art: <Finder />, on: true },
  { key: 'calc', art: <Calculator /> },
  { key: 'photos', art: <Photos /> },
  { key: 'calendar', art: <CalendarFace>Vie<b>19</b></CalendarFace>, on: true },
  { key: 'contacts', art: <Contacts /> },
  { key: 'reminders', art: <Reminders /> },
  {
    key: 'prime', bg: '#0b6cf5',
    art: <PrimeFace>prime<br />video<svg width="20" height="7" viewBox="0 0 20 7"><path d="M1 1.500c5 4.500 11 4.500 16 .500M14 1l4-.300-.800 4" fill="none" stroke="#fff" strokeWidth="1.500" /></svg></PrimeFace>,
  },
  { key: 'terminal', art: <Terminal /> },
  { key: 'notes', art: <Notes />, on: true },
  { key: 'settings', art: <Gear /> },
  { key: 'lock', art: <LockApp />, bg: 'linear-gradient(#48484a, #2c2c2e)' },
  { key: 'activity', art: <Activity />, on: true },
  { key: 'chrome', art: <ChromeApp />, on: true },
  { key: 'whatsapp', art: <FaWhatsapp size={37} color="#fff" />, on: true, bg: 'linear-gradient(#5fe06a, #1fbf38)' },
  { key: 'xcode', art: <Xcode />, bg: 'linear-gradient(#404044, #262628)' },
  { key: 'warp', art: <WarpStripes />, on: true, bg: '#161616' },
  { key: 'vscode', art: <VsCode />, on: true },
  { key: 'music', art: <Music />, on: true },
  { key: 'postman', art: <Postman />, on: true, bg: '#ff6634' },
  { key: 'dbeaver', art: <Beaver />, on: true, bg: '#fff' },
  { key: 'mongo', art: <Leaf />, on: true },
  { key: 'notion', art: <NotionApp />, on: true, rule: true, bg: 'linear-gradient(#3c3c3e, #232324)' },
  { key: 'docker', art: <FaDocker size={36} color="#fff" />, on: true, bg: '#1d84ee' },
  { key: 'lens', art: <Lens />, on: true },
];

export default function App() {
  return (
    <Desktop>
      <Global />
      <MenuBar>
        <MenuGroup $gap={20.5}>
          <FaApple size={17} />
          <MenuWord $bold>Chrome</MenuWord>
          {['Archivo', 'Edición', 'Visualización', 'Historial', 'Favoritos', 'Perfiles', 'Pestaña', 'Ventana', 'Ayuda'].map(w => (
            <MenuWord key={w}>{w}</MenuWord>
          ))}
        </MenuGroup>
        <MenuGroup $gap={19}>
          <svg width="21" height="17" viewBox="0 0 21 17" fill="#e8e8f6"><path d="M0 7h12v3a6 6 0 0 1-12 0ZM1 4h2v2H1zM4 4h2v2H4zM7 4h2v2H7zM4 1h2v2H4zM7 1h2v2H7z" /><circle cx="14" cy="11" r="5" fill="#100a78" stroke="#e8e8f6" strokeWidth="1.400" /><path d="M13.300 8h1.400v4h-1.400zM13.300 13h1.400v1.200h-1.400z" /></svg>
          <svg width="20" height="14" viewBox="0 0 20 14"><path d="M3 12a4 4 0 0 1 .500-7A6 6 0 0 1 14 4l-9 9Z" fill="#a9a8d0" /><path d="M2 13.500c1-4 4-6 7.500-5A5.500 5.500 0 0 1 19 9a2.800 2.800 0 0 1-1 4.500Z" fill="#fff" /></svg>
          <svg width="17" height="17" viewBox="0 0 17 17"><rect x="1.500" y="1.500" width="14" height="14" rx="2" fill="none" stroke="#fff" strokeWidth="1.500" /><text x="8.500" y="12.600" textAnchor="middle" fontFamily="Liberation Serif" fontWeight="700" fontSize="12" fill="#fff">N</text></svg>
          <Headphones size={17} />
          <CirclePlay size={16} />
          <KeyBadge>A</KeyBadge>
          <Search size={15} />
          <Assistant>
            <svg width="15" height="15" viewBox="0 0 15 15"><circle cx="7.500" cy="7.500" r="7.500" fill="#f0559a" /><path d="M7.500 0a7.500 7.500 0 0 1 7.500 7.500H7.500Z" fill="#ff8a3a" /><path d="M0 7.500a7.500 7.500 0 0 0 7.500 7.500V7.500Z" fill="#4a9af5" /><circle cx="7.500" cy="7.500" r="4.300" fill="#fff" /><path d="M5 6h2M8.500 6h2M5.500 9h4" stroke="#d03060" strokeWidth="1.200" /></svg>
          </Assistant>
          <svg width="15" height="15" viewBox="0 0 15 15" fill="none" stroke="#fff" strokeWidth="1.500"><rect x="1" y="1" width="13" height="5.500" rx="2.750" fill="#fff" /><rect x="1" y="8.500" width="13" height="5.500" rx="2.750" /><circle cx="4" cy="3.750" r="1" fill="#111078" stroke="#111078" /><circle cx="11" cy="11.250" r="1" /></svg>
          <Clock>{'Vie 19 sept  12:21 p. m.'}</Clock>
        </MenuGroup>
      </MenuBar>

      <Browser>
        <TabStrip>
          <Lights><span /><span /><span /></Lights>
          {tabs.map(t => (
            <Tab key={t.title} $active={t.active} $sep={t.sep}>
              <Favicon><TabIcon name={t.icon} /></Favicon>
              <TabTitle>{t.title}</TabTitle>
              <X size={13} strokeWidth={2.4} />
            </Tab>
          ))}
          <NewTab><Plus size={15} strokeWidth={2.2} /></NewTab>
          <TabMenu><ChevronDown size={14} strokeWidth={2.6} /></TabMenu>
        </TabStrip>
        <Toolbar>
          <NavIcons>
            <ArrowLeft size={17} />
            <ArrowRight size={17} color="#6b6a7e" />
            <RotateCw size={15} strokeWidth={2.2} />
          </NavIcons>
          <UrlBar>
            <InfoDot><Info size={16} /></InfoDot>
            <span><b>localhost:</b>4200/applicant/user/12703884-5f01-45d3-8734-c2e294bd086d/application/92/step-1</span>
            <StarSlot><Star size={16} /></StarSlot>
          </UrlBar>
          <Extensions>
            <ExtThumb />
            <MdOutlineExtension size={19} />
            <ThinBar $h={16} $c="#55546a" />
            <ProfilePic>
              <svg width="20" height="20" viewBox="0 0 20 20"><path d="M3 20c0-6 3-7 7-7s7 1 7 7Z" fill="#3e4450" /><ellipse cx="10" cy="8.500" rx="3.600" ry="4.800" fill="#b98a70" /><path d="M6 7.500c-.5-6 8.500-6 8 0-1-2-1.500-2.500-4-2.500s-3 .500-4 2.500Z" fill="#1c1a1c" /></svg>
            </ProfilePic>
            <MdMoreVert size={18} />
          </Extensions>
        </Toolbar>

        <Page>
          <Sidebar>
            <SideTop>
              <BrandMark size={37} dim={0.72} />
              <CircleUserRound size={22} strokeWidth={1.8} />
            </SideTop>
            <Person>
              <MdAccountCircle size={94} />
              <PersonName>Roberto Carlos Suárez</PersonName>
              <PersonMail>electrosonix12@gmail.com</PersonMail>
            </Person>
            {nav.map(n => (
              <NavItem key={n.title} $h={n.h}>
                {n.icon}
                <div>
                  <NavTitle>{n.title}</NavTitle>
                  {n.sub && <NavSub>{n.sub}</NavSub>}
                </div>
              </NavItem>
            ))}
          </Sidebar>
          <Content>
            <TopRow>
              <Burger />
              <TopRight>
                <Flag />
                <MdZoomOutMap size={22} color="#2c3646" />
                <Bell><MdNotifications size={22} /><BellCount>25</BellCount></Bell>
              </TopRight>
            </TopRow>
            <StateRow>
              <Chip>Estado: Exitoso</Chip>
              <MdMoreVert size={22} />
            </StateRow>
            <Divider />
            <Stepper>
              <StepLine />
              <Step>
                <StepDot><Check size={14} strokeWidth={3} /></StepDot>
                Actividades
                <small>Completado</small>
              </Step>
            </Stepper>
            <BluePanel>
              <Quote>a), y<br />la</Quote>
              <AnswerTail>, cumpliendo</AnswerTail>
              <Answer>R. Soy el padre/madre biológico(a) del hijo(a).</Answer>
              <Question>P. ¿El hijo(a) para el cual está presentando la petición tiene actualmente menos de 21 años de edad?</Question>
            </BluePanel>
          </Content>
          <PageScroll />
        </Page>
      </Browser>

      <Clip><DialogShadow /></Clip>
      <CompileDialog>
        <DialogHead>
          <BrandMark size={40} />
          <h2>Configuración de compilado PDF para la aplicación de usuario actual</h2>
          <X size={30} strokeWidth={1.8} color="#bcbcbc" />
        </DialogHead>
        <DialogBody>
          <OrderPane>
            <OrderHead>
              <h3>Orden de documentos</h3>
              <AddPill $w={188} $tone="navy"><MdInsertDriveFile size={18} />Agregar separador</AddPill>
            </OrderHead>
            <Hint>Arrastra los documentos para cambiar el orden</Hint>
            <DocList>
              {docs.map((d, i) => (
                <DocRow key={d.name} $kind={d.kind}>
                  <MdDragIndicator size={21} />
                  {docIcon[d.kind]}
                  <span>{i + 1}.</span>
                  {d.name}
                </DocRow>
              ))}
            </DocList>
          </OrderPane>
          <PreviewPane>
            <PreviewTop><MdFullscreen size={24} /></PreviewTop>
            <PdfBar>
              <ZoomBox>100%</ZoomBox>
              <BarItem $w={40}><Plus size={16} strokeWidth={1.8} /></BarItem>
              <ThinBar $h={20} $c="#4f4f4f" />
              <BarItem $w={56}>
                <svg width="14" height="16" viewBox="0 0 14 16" fill="none" stroke="currentColor" strokeWidth="1.500"><rect x="1.200" y="1" width="11.600" height="14" rx="1" /><path d="M5 6l2-2 2 2ZM5 10l2 2 2-2Z" fill="currentColor" strokeWidth=".5" /></svg>
              </BarItem>
              <BarItem $w={6}>
                <svg width="18" height="17" viewBox="0 0 18 17" fill="none" stroke="currentColor" strokeWidth="1.500" overflow="visible"><path d="M5.500 5.500L9 9l-3.500 3.500L2 9Z" /><path d="M9 2.500a6.500 6.500 0 1 1-1 12.500M11 0L8.500 2.500 11 5" /></svg>
              </BarItem>
              <BarItem $w={25} />
              <ThinBar $h={20} $c="#4f4f4f" />
              <BarItem $w={44}>
                <svg width="16" height="17" viewBox="0 0 16 17" fill="none" stroke="currentColor" strokeWidth="1.500" strokeLinecap="round"><path d="M1.500 3.500c1-2.500 4.500-2.500 4 0S3 7.500 3.500 9.500s2.500 1 4-1.500 3.500-3.500 4-2-2 4-3.500 5.500-1.500 4 .5 3 3.500-4.500 5-4-.5 2.500-.5 3.500 1 .800 1.800.300" /></svg>
              </BarItem>
              <ThinBar $h={20} $c="#4f4f4f" />
              <BarItem $w={46} $dim><Undo2 size={15} /></BarItem>
              <BarItem $w={17} $dim><Redo2 size={15} /></BarItem>
              <BarItem $w={124} />
              <BarItem $w={38}><MdOutlineFileDownload size={20} /></BarItem>
              <BarItem $w={34}><MdOutlinePrint size={19} /></BarItem>
              <BarItem $w={38}><MdMoreVert size={18} /></BarItem>
            </PdfBar>
            <Viewer>
              <Sheet>
                <Letterhead>
                  <PaperMark />
                  <Brand>AsisVisa<small>IMMIGRATION</small><i /></Brand>
                </Letterhead>
                <SheetLine $top={17} $w={533}>[documentDate]</SheetLine>
                <SheetLine $top={70} $w={325} $ital $bold>[applicationDescription]</SheetLine>
                <SheetLine $top={13} $w={408}>[petitionerLastNames], <em>[petitionerFirstNames]</em></SheetLine>
                <SheetLine $top={0} $w={421} $ital>[beneficiaryLastNames], [beneficiaryFirstNames]</SheetLine>
                <SheetLine $top={41} $w={533} $ws={4.5}>prepared for the above-referenced individual his application for</SheetLine>
                <SheetLine $top={0} $w={533} $ws={3.1}>please find the following documentation related to the applicant’s</SheetLine>
                <SheetLine $top={27} $w={329}>to support this application:</SheetLine>
                <Closing>{'Should you need any additional information or documentation, please do not hesitate to contact the\napplicant at his contact information provided in the forms attached.'}</Closing>
              </Sheet>
              <ViewerScroll><i /></ViewerScroll>
            </Viewer>
          </PreviewPane>
        </DialogBody>
        <DialogFoot>
          <Pill $w={125} $tone="navy">Previsualizar</Pill>
          <Pill $w={157} $tone="gold">Guardar Cambios</Pill>
        </DialogFoot>
      </CompileDialog>

      <SeparatorDialog>
        <h3>Crear separador</h3>
        <Field>
          <FieldLabel>Título*</FieldLabel>
          <FieldValue>EXHIBIT A.1</FieldValue>
        </Field>
        <Field $focus>
          <FieldLabel $focus>Subtítulo (opcional)</FieldLabel>
          <FieldValue $focus>Copy of the Applicant’s passport biographical page, showing an expiration date of July 19, 2034.<i /></FieldValue>
        </Field>
        <Preview>
          <h2>EXHIBIT A.1</h2>
          <p>Copy of the Applicant’s passport biographical page, showing an expiration date of July 19, 2034.</p>
        </Preview>
        <Actions>
          <Cancel>Cancelar</Cancel>
          <Pill $w={149} $tone="goldBright">Crear separador</Pill>
        </Actions>
      </SeparatorDialog>

      <DockBar>
        {apps.map(a => (
          <React.Fragment key={a.key}>
            {a.rule && <DockDivider />}
            <DockSlot $running={a.on}><Tile $bg={a.bg}>{a.art}</Tile></DockSlot>
          </React.Fragment>
        ))}
        <DockDivider />
        <DockSlot><TrashCan /></DockSlot>
      </DockBar>
    </Desktop>
  );
}
